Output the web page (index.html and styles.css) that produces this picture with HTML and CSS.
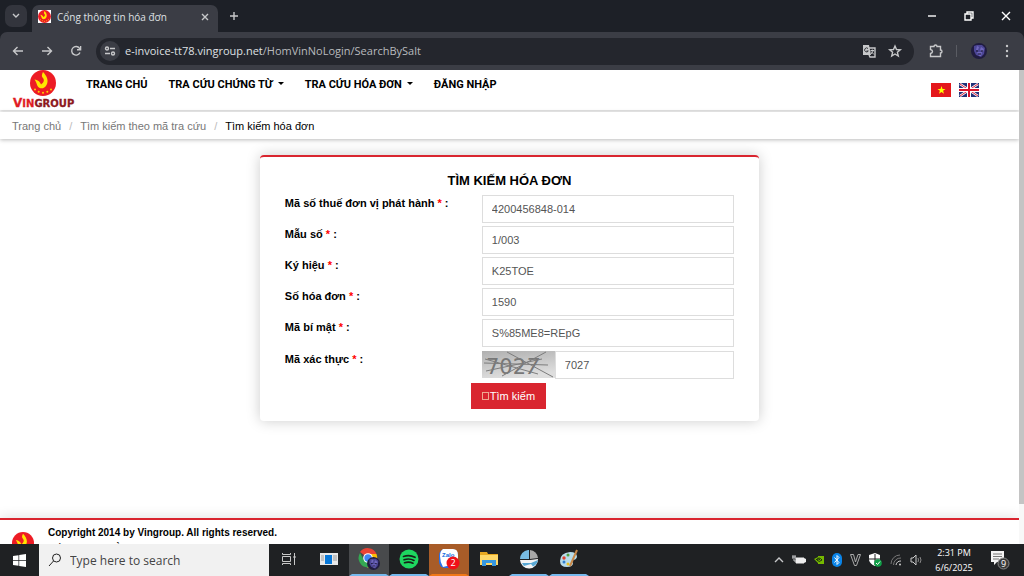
FILE: index.html
```html
<!DOCTYPE html>
<html lang="vi">
<head>
<meta charset="utf-8">
<meta name="viewport" content="width=device-width, initial-scale=1">
<title>Cổng thông tin hóa đơn</title>
<link rel="stylesheet" href="styles.css">
</head>
<body>
<svg class="defs" aria-hidden="true">
  <symbol id="emblem" viewBox="0 0 26 26">
    <circle cx="13" cy="13" r="13" fill="#ed1c24"/>
    <path d="M13 2C17 6 19 11 16.500 15C14.500 19 9.500 19.500 7.500 16C6.500 13.500 6 11.500 4.500 9.500C8.500 10 10 12 11 14.500C14.500 12 14.500 9.500 12.500 7.500C11.300 6 12 4 13 2Z" fill="#ffe600"/>
    <g fill="#ffd200"><circle cx="5" cy="19.500" r="1"/><circle cx="8.700" cy="21.700" r="1"/><circle cx="13" cy="22.700" r="1"/><circle cx="17.300" cy="21.700" r="1"/><circle cx="21" cy="19.500" r="1"/></g>
  </symbol>
  <symbol id="avatar" viewBox="0 0 16 16">
    <circle cx="8" cy="8" r="8" fill="#201c40"/>
    <path d="M3 3L6 2L11 2L14 5L13 11L10 14L5 12L3 8Z" fill="#4c4696"/>
    <path d="M6 3L8 4L7 7L5 7ZM10 4L13 6L12 9L9 7ZM6 9H11L10 13L8 13Z" fill="#7068bc"/>
    <path d="M5 8H7M10 8H12M7 11H10" stroke="#18152e"/>
  </symbol>
</svg>

<header class="browser">
  <div class="tabstrip">
    <button class="tab-menu" aria-label="Search tabs"><svg width="8" height="6" viewBox="0 0 8 6"><path d="M1 1L4 4L7 1" class="line"/></svg></button>
    <div class="tab">
      <svg class="favicon" width="13" height="13" viewBox="0 0 13 13"><path fill="#fff" d="M0 0H13V13H0Z"/><use href="#emblem" width="13" height="13"/></svg>
      <span class="tab-title">Cổng thông tin hóa đơn</span>
      <button class="icon-btn" aria-label="Close tab"><svg width="8" height="8" viewBox="0 0 8 8"><path d="M1 1L7 7M7 1L1 7" class="line"/></svg></button>
    </div>
    <button class="icon-btn new-tab" aria-label="New tab"><svg width="10" height="10" viewBox="0 0 10 10"><path d="M5 1V9M1 5H9" class="line"/></svg></button>
    <div class="window-controls">
      <button class="icon-btn" aria-label="Minimize"><svg width="10" height="10" viewBox="0 0 10 10"><path d="M1 5H9" class="line bright-line"/></svg></button>
      <button class="icon-btn" aria-label="Restore"><svg width="10" height="10" viewBox="0 0 10 10"><path d="M1 3H7V9H1ZM3 3V1H9V7H7" class="line bright-line"/></svg></button>
      <button class="icon-btn" aria-label="Close"><svg width="10" height="10" viewBox="0 0 10 10"><path d="M1 1L9 9M9 1L1 9" class="line bright-line"/></svg></button>
    </div>
  </div>
  <div class="toolbar">
    <button class="icon-btn nav-btn" aria-label="Back"><svg width="12" height="12" viewBox="0 0 12 12"><path d="M11 6H1.500M5.500 2L1.500 6L5.500 10" class="line"/></svg></button>
    <button class="icon-btn nav-btn" aria-label="Forward"><svg width="12" height="12" viewBox="0 0 12 12"><path d="M1 6H10.500M6.500 2L10.500 6L6.500 10" class="line"/></svg></button>
    <button class="icon-btn nav-btn" aria-label="Reload"><svg width="12" height="12" viewBox="0 0 12 12"><path d="M10 7.500A4.300 4.300 0 1 1 9.500 3.300L10.500 4.500M10.600 1V4.700H7" class="line"/></svg></button>
    <div class="omnibox">
      <button class="site-info" aria-label="Site information"><svg width="12" height="12" viewBox="0 0 12 12"><path d="M6 3.500H11M1 8.500H6" class="line"/><circle cx="3" cy="3.500" r="1.500" class="line"/><circle cx="9" cy="8.500" r="1.500" class="line"/></svg></button>
      <span class="url">e-invoice-tt78.vingroup.net<span class="path">/HomVinNoLogin/SearchBySalt</span></span>
      <button class="icon-btn" aria-label="Translate"><svg width="14" height="14" viewBox="0 0 14 14"><path d="M1 1H7L9 11H1Z" fill="#c7c8ca"/><path d="M6 4H13V13H8L7 11" class="line"/><path d="M6 4.500A2 2 0 1 0 6.300 7H4.500" fill="none" stroke="#33353a"/><path d="M8.500 6.500H12M10.300 5.500V6.500M11.500 6.500L9 10M9 7.500L12 10.500" class="line thin"/></svg></button>
      <button class="icon-btn" aria-label="Bookmark"><svg width="12" height="12" viewBox="0 0 12 12"><path d="M6 1L7.500 4.500L11.300 4.800L8.400 7.300L9.300 11L6 9L2.700 11L3.600 7.300L.7 4.800L4.500 4.500Z" class="line"/></svg></button>
    </div>
    <button class="icon-btn ext" aria-label="Extensions"><svg width="14" height="14" viewBox="0 0 14 14"><path d="M1.500 2.500H5Q5 1 6.500 1T8 2.500H11.500V6Q13 6 13 7.500T11.500 9V12.500H1.500V9.500Q3.500 9 3.500 7.500T1.500 5.500Z" class="line"/></svg></button>
    <span class="separator"></span>
    <button class="icon-btn" aria-label="Profile"><svg width="16" height="16"><use href="#avatar"/></svg></button>
    <button class="icon-btn more" aria-label="Menu"><svg width="4" height="14" viewBox="0 0 4 14" fill="#c7c8ca"><circle cx="2" cy="2" r="1.200"/><circle cx="2" cy="7" r="1.200"/><circle cx="2" cy="12" r="1.200"/></svg></button>
  </div>
</header>

<div class="viewport">
  <div class="page">
    <header class="site-header">
      <a class="logo" href="#" aria-label="Vingroup">
        <svg width="64" height="40" viewBox="0 0 64 40"><use href="#emblem" x="18" y="0" width="26" height="26"/><text y="37" class="wordmark"><tspan x="1" class="bright"><tspan class="cap">V</tspan>IN</tspan><tspan>GROUP</tspan></text></svg>
      </a>
      <nav class="menu">
        <a href="#">TRANG CHỦ</a>
        <a href="#" class="drop">TRA CỨU CHỨNG TỪ</a>
        <a href="#" class="drop">TRA CỨU HÓA ĐƠN</a>
        <a href="#">ĐĂNG NHẬP</a>
      </nav>
      <div class="languages">
        <a href="#" aria-label="Tiếng Việt"><svg width="20" height="14" viewBox="0 0 20 14"><path fill="#e4181c" d="M0 0H20V14H0Z"/><path fill="#ff0" d="M10.500 3L11.500 6H14.500L12.100 7.800L13 10.800L10.500 9L8 10.800L8.900 7.800L6.500 6H9.500Z"/></svg></a>
        <a href="#" aria-label="English"><svg width="20" height="14" viewBox="0 0 20 14"><path fill="#203078" d="M0 0H20V14H0Z"/><path d="M1 1L19 13M19 1L1 13" stroke="#fff" stroke-width="2.500"/><path d="M1 1L19 13M19 1L1 13" stroke="#d8203c"/><path d="M10 0V14M0 7H20" stroke="#fff" stroke-width="4"/><path d="M10 0V14M0 7H20" stroke="#d8142c" stroke-width="2"/></svg></a>
      </div>
    </header>
    <nav class="breadcrumb" aria-label="Breadcrumb">
      <a href="#">Trang chủ</a><span class="slash">/</span><a href="#">Tìm kiếm theo mã tra cứu</a><span class="slash">/</span><span class="current">Tìm kiếm hóa đơn</span>
    </nav>
    <main class="content">
      <form class="card">
        <h1>TÌM KIẾM HÓA ĐƠN</h1>
        <div class="row"><label for="tax">Mã số thuế đơn vị phát hành <i>*</i> :</label><input id="tax" value="4200456848-014"></div>
        <div class="row"><label for="pattern">Mẫu số <i>*</i> :</label><input id="pattern" value="1/003"></div>
        <div class="row"><label for="serial">Ký hiệu <i>*</i> :</label><input id="serial" value="K25TOE"></div>
        <div class="row"><label for="number">Số hóa đơn <i>*</i> :</label><input id="number" value="1590"></div>
        <div class="row"><label for="secret">Mã bí mật <i>*</i> :</label><input id="secret" value="S%85ME8=REpG"></div>
        <div class="row captcha-row"><label for="captcha">Mã xác thực <i>*</i> :</label>
          <div class="captcha">
            <svg width="73" height="27" viewBox="0 0 73 27">
              <defs><linearGradient id="haze" x1="0" y1="0" x2=".3" y2="1"><stop stop-color="#b0b0b0"/><stop offset="1" stop-color="#dedede"/></linearGradient></defs>
              <path fill="url(#haze)" d="M0 0H73V27H0Z"/>
              <text x="4" y="23" class="captcha-text">702<tspan class="slant">7</tspan></text>
              <path d="M25 1L71 26M64 1L20 25M2 12L66 14M4 20L60 8M3 8L56 23" fill="none" stroke="#7c7c7c"/>
            </svg>
            <input id="captcha" value="7027">
          </div>
        </div>
        <button type="button" class="submit"><span class="missing"></span>Tìm kiếm</button>
      </form>
    </main>
    <footer class="site-footer">
      <svg class="footer-logo" width="22" height="22"><use href="#emblem"/></svg>
      <div><p>Copyright 2014 by Vingroup. All rights reserved.</p><p>Số 7 Đường Bằng Lăng 1, Khu đô thị sinh thái Vinhomes Riverside</p></div>
    </footer>
  </div>
  <div class="scrollbar"><div class="thumb"></div></div>
</div>

<footer class="taskbar">
  <button class="start" aria-label="Start"><svg width="13" height="13" viewBox="0 0 13 13" fill="#fff"><path d="M0 2L5.500 1.200V6H0ZM6.200 1.100L13 0V6H6.200ZM0 6.700H5.500V11.700L0 11ZM6.200 6.700H13V13L6.200 11.900Z"/></svg></button>
  <label class="search"><svg width="14" height="14" viewBox="0 0 14 14"><circle cx="8.500" cy="5" r="4" fill="none" stroke="#222"/><path d="M5.500 8L1 13" stroke="#222"/></svg><input type="text" placeholder="Type here to search" aria-label="Type here to search"></label>
  <div class="apps">
    <button aria-label="Task view"><svg width="16" height="14" viewBox="0 0 16 14" fill="none" stroke="#c8c8c8"><path d="M1.500 1V2.500H9.500V1M1.500 4.500H9.500V9.500H1.500ZM1.500 13V11.500H9.500V13M13.500 1V13"/><path d="M12.500 4H14.500V6H12.500Z" fill="#c8c8c8" stroke="none"/></svg></button>
    <button aria-label="News"><svg width="18" height="14" viewBox="0 0 18 14"><path fill="#e8e8e8" d="M0 1H18V13H0Z"/><path fill="#0878d8" d="M5 3H12V12H5Z"/><path d="M1 4H4M1 6H4M1 8H4M13 4H17M13 6H17M13 8H17" stroke="#999"/></svg></button>
    <button class="running active" aria-label="Chrome"><svg width="22" height="22" viewBox="0 0 22 22"><path d="M10 10L2 4A9.500 9.500 0 0 1 18.500 6Z" fill="#ea4335"/><path d="M10 10H19A9 9 0 0 1 9 19.500Z" fill="#fbbc05"/><path d="M10 10V19.500A9.500 9.500 0 0 1 2 5L6 12Z" fill="#34a853"/><path d="M10 6H18.500A9 9 0 0 1 14 18L10 19L13 12Z" fill="#fbbc05"/><circle cx="10" cy="10" r="4.800" fill="#fff"/><circle cx="10" cy="10" r="3.700" fill="#4285f4"/><use href="#avatar" x="9" y="9" width="13" height="13"/></svg></button>
    <button class="running" aria-label="Spotify"><svg width="20" height="20" viewBox="0 0 20 20"><circle cx="10" cy="10" r="9.500" fill="#1ed760"/><path d="M4.500 7.500Q10.500 5.500 16 8.300M5 10.700Q10.500 9 15 11.400M5.500 13.700Q10 12.200 14 14.200" fill="none" stroke="#182018" stroke-width="1.700" stroke-linecap="round"/></svg></button>
    <button class="running alert" aria-label="Zalo, 2 notifications"><svg width="22" height="22" viewBox="0 0 22 22"><rect x="1" y="1" width="19" height="19" rx="6" fill="#2870e8"/><path d="M5 1H15Q20 1 20 7V13Q20 18 14 18H9L5 19Q2 14 2 8Q2 3 5 1Z" fill="#fff"/><text x="4" y="9" class="zalo">Zalo</text><circle cx="15" cy="15" r="6.500" fill="#f01018"/><text x="15" y="18" class="count">2</text></svg></button>
    <button aria-label="File Explorer"><svg width="18" height="16" viewBox="0 0 18 16"><path d="M0 1H7L8 3H18V14H0Z" fill="#e8a820"/><path d="M0 4H18V14H0Z" fill="#ffd868"/><path d="M2 15V9H16V15H12V12H6V15Z" fill="#3898e0"/></svg></button>
    <button class="running" aria-label="Monitor"><svg width="20" height="20" viewBox="0 0 20 20"><path d="M9 1A9 9 0 0 0 1 10H10V1Z" fill="#78bce4"/><path d="M11 1A9 9 0 0 1 19 9L11 10Z" fill="#a8a8a8"/><path d="M1 11H11L19 10A9 9 0 0 1 1 11Z" fill="#f4f4f4"/><path d="M3 14H12L19 11A9 9 0 0 1 14 17.500L12 15L5 17Q4 16 3 14Z" fill="#58a8d4"/></svg></button>
    <button class="running" aria-label="Paint"><svg width="20" height="20" viewBox="0 0 20 20"><path d="M1 12Q1 4 11 3Q18 3 18 8Q17 11 14 11Q12 12 14 14Q14 18 8 18Q1 18 1 12Z" fill="#b8dcea"/><circle cx="5" cy="9" r="1.700" fill="#e04030"/><circle cx="9" cy="6" r="1.500" fill="#50a040"/><circle cx="5" cy="13" r="1.500" fill="#3080d0"/><circle cx="9" cy="15" r="1.500" fill="#e8c020"/><path d="M18 1L11 17" stroke="#c88848" stroke-width="2"/></svg></button>
  </div>
  <div class="tray">
    <svg width="10" height="6" viewBox="0 0 10 6"><path d="M1 5L5 1L9 5" class="line"/></svg>
    <svg width="14" height="10" viewBox="0 0 14 10"><path d="M4 3H12V8H4ZM12 4H13.500V7H12Z" fill="#eee" stroke="#eee"/><path d="M0 2H4M1 0V4M3 0V4M2 4V6H4" class="line thin"/></svg>
    <svg width="10" height="8" viewBox="0 0 10 8"><path fill="#76b900" d="M0 3L4 1V0H10V8H4V7Z"/><path d="M2 4Q5 0 8 4Q5 7 3 4Q5 2 6 4" fill="none" stroke="#203010"/></svg>
    <svg width="10" height="14" viewBox="0 0 10 14"><rect width="10" height="14" rx="5" fill="#0a84e8"/><path d="M2.500 4.500L7 9.500L5 11.500V2.500L7 4.500L2.500 9.500" fill="none" stroke="#fff"/></svg>
    <svg width="11" height="12" viewBox="0 0 11 12"><path d="M.5 .5H3.500L5.500 8L8 .5H10.500L6.500 11.500H4.500Z" fill="none" stroke="#aaa"/></svg>
    <svg width="13" height="14" viewBox="0 0 13 14"><path fill="#fff" d="M6 0L11 2V7Q10 11 6 13Q1 11 0 7V2Z"/><path d="M6 1V12M0 6H11" stroke="#222"/><circle cx="9" cy="10" r="3.800" fill="#10a048"/><path d="M7 10L8.500 11.500L11 8.500" fill="none" stroke="#fff"/></svg>
    <svg width="12" height="12" viewBox="0 0 12 12" fill="none"><path d="M1 10A9 9 0 0 1 10 1M3.500 11A7 7 0 0 1 11 4" stroke="#777"/><path d="M6 11A5 5 0 0 1 11 7" stroke="#ccc"/><circle cx="10" cy="10.500" r="1" fill="#ccc"/></svg>
    <svg width="13" height="12" viewBox="0 0 13 12" fill="none"><path d="M1 4H3L6 1V11L3 8H1Z" stroke="#ccc"/><path d="M8 4Q9 6 8 8M10 3Q12 6 10 9" stroke="#888"/></svg>
  </div>
  <div class="clock"><span>2:31 PM</span><span>6/6/2025</span></div>
  <button class="notices" aria-label="9 notifications"><svg width="20" height="20" viewBox="0 0 20 20"><path d="M1 1H14V12H7L4 15V12H1Z" fill="#f4f4f4"/><path d="M3 4H12M3 6.500H12M3 9H9" stroke="#777"/><circle cx="13.500" cy="13.500" r="5.500" fill="#3a3a3a" stroke="#888"/><text x="13.500" y="17" class="count">9</text></svg></button>
</footer>
</body>
</html>
```

FILE: styles.css
```css
* { box-sizing: border-box; }
body { margin: 0; height: 100vh; display: flex; flex-direction: column; overflow: hidden; font: 11px/16px "Liberation Sans", Arial, sans-serif; color: #000; background: #fff; }
button { border: 0; padding: 0; background: none; color: inherit; font: inherit; }
a { color: inherit; text-decoration: none; }
p, h1 { margin: 0; }
svg { display: block; flex: none; overflow: visible; }
.defs { position: absolute; width: 0; height: 0; }
.line { fill: none; stroke: #c7c8ca; stroke-width: 1.4; }
.thin { stroke-width: 1; }
.bright-line { stroke: #fff; }

.browser { flex: none; background: #1d2027; color: #dfe0e3; font-family: "Open Sans", sans-serif; }
.tabstrip { display: flex; align-items: center; height: 32px; padding-left: 5px; }
.tab-menu { display: flex; align-items: center; justify-content: center; width: 22px; height: 22px; border-radius: 7px; background: #33353d; }
.tab { display: flex; align-items: center; align-self: flex-end; width: 186px; height: 27px; margin-left: 5px; padding: 0 9px 4px 6px; border-radius: 7px 7px 0 0; background: #3b3d45; }
.tab-title { flex: 1; padding-left: 6px; font-size: 10px; white-space: nowrap; }
.icon-btn { display: flex; align-items: center; justify-content: center; flex: none; }
.new-tab { margin-left: 11px; }
.window-controls { display: flex; gap: 27px; margin-left: auto; padding-right: 13px; }
.toolbar { display: flex; align-items: center; height: 38px; padding: 0 15px 0 12px; background: #3b3d45; border-radius: 7px 7px 0 0; }
.nav-btn { width: 12px; margin-right: 17px; }
.omnibox { flex: 1; display: flex; align-items: center; gap: 13px; height: 27px; margin-left: -3px; padding: 0 13px 0 4px; border-radius: 14px; background: #24262d; }
.site-info { display: flex; align-items: center; justify-content: center; width: 20px; height: 20px; border-radius: 10px; background: #3b3d45; }
.url { flex: 1; margin-left: -8px; font-size: 11px; }
.path { color: #b8babd; }
.ext { margin-left: 15px; }
.separator { width: 1px; height: 12px; margin: 0 14px 0 13px; background: #5a5c63; }
.more { margin-left: 18px; }

.viewport { flex: 1; min-height: 0; display: flex; }
.page { flex: 1; min-width: 0; display: flex; flex-direction: column; overflow: hidden; }
.site-header { flex: none; display: flex; align-items: flex-start; height: 40px; padding: 0 40px 0 12px; box-shadow: 0 1px 3px #ccc; }
.wordmark { font: bold 10px "DejaVu Sans", sans-serif; fill: #8c1820; stroke: #8c1820; stroke-width: 0.3; }
.wordmark .bright { fill: #e01c24; stroke: #e01c24; }
.wordmark .cap { font-size: 12px; }
.menu { display: flex; gap: 21px; margin-left: 10px; padding-top: 7px; font-family: Roboto, "Liberation Sans", sans-serif; font-weight: bold; white-space: nowrap; }
.drop::after { content: ""; display: inline-block; margin-left: 5px; vertical-align: 3px; border: 3px solid transparent; border-top-color: #000; border-bottom: 0; }
.languages { display: flex; gap: 8px; margin-left: auto; padding-top: 13px; }
.breadcrumb { flex: none; display: flex; height: 27px; margin-top: 2px; padding: 6px 12px; background: #fff; box-shadow: 0 1px 4px #bbb; color: #777; }
.slash { padding: 0 8px; color: #bbb; }
.current { color: #000; }
.content { flex: 1; padding-top: 16px; }
.card { width: 49%; margin: 0 auto; padding: 16px 25px 12px; border-top: 2px solid #d9252f; border-radius: 4px; box-shadow: 0 0 14px #ccc; }
.card h1 { margin-bottom: 6px; font-size: 13px; line-height: 16px; text-align: center; }
.row { display: grid; grid-template-columns: 197px 1fr; margin-bottom: 3px; }
.row label { font-weight: bold; }
.row i { color: #f00; font-style: normal; }
.row input { width: 100%; min-width: 0; height: 28px; padding: 0 9px; border: 1px solid #ddd; color: #555; background: #fff; font: inherit; }
.row.captcha-row { margin: 4px 0; }
.captcha { display: flex; }
.captcha-text { font: 21px "DejaVu Sans", sans-serif; fill: #777; }
.slant { font-style: italic; }
.submit { display: flex; align-items: center; height: 26px; margin-left: 186px; padding: 0 11px; background: #d9252f; color: #fff; }
.missing { width: 7px; height: 8px; margin-right: 1px; border: 1px solid #f0a890; }
.site-footer { flex: none; display: flex; gap: 14px; height: 26px; padding: 5px 12px 0; border-top: 2px solid #d9252f; font-size: 10px; font-weight: bold; line-height: 16px; overflow: hidden; box-shadow: 0 0 14px #ddd; }
.footer-logo { margin-top: 7px; }
.scrollbar { width: 5px; background: #f8f8f8; }
.thumb { height: 434px; background: #c4c4c4; }

.taskbar { flex: none; display: flex; align-items: stretch; height: 32px; background: #1f2123; color: #fff; font-family: "Open Sans", sans-serif; }
.start { display: flex; align-items: center; justify-content: center; width: 39px; }
.search { display: flex; align-items: center; gap: 8px; width: 230px; padding-left: 9px; background: #f1f1f1; }
.search input { flex: 1; min-width: 0; padding: 2px 0 0; border: 0; background: none; color: #333; font: 12px/16px "Open Sans", sans-serif; }
.search input::placeholder { color: #444; opacity: 1; }
.apps { display: flex; }
.apps button { display: flex; align-items: center; justify-content: center; width: 40px; border-bottom: 2px solid transparent; border-left: 3px solid #1f2123; border-right: 3px solid #1f2123; }
.apps .running { border-bottom-color: #76b9ed; }
.apps .active { border-left-color: #484a4c; border-right-color: #484a4c; background: #484a4c; }
.apps .alert { border-color: #a85c28; border-bottom-color: #f07818; background: #a85c28; }
.zalo { font: bold 6px "Liberation Sans", sans-serif; fill: #1068e0; }
.count { font: 9px "Open Sans", sans-serif; fill: #fff; text-anchor: middle; }
.tray { display: flex; align-items: center; gap: 8px; margin-left: auto; }
.clock { display: flex; flex-direction: column; justify-content: center; width: 62px; text-align: center; font-size: 9px; line-height: 15px; }
.notices { display: flex; align-items: center; padding: 0 14px 0 5px; }
```
